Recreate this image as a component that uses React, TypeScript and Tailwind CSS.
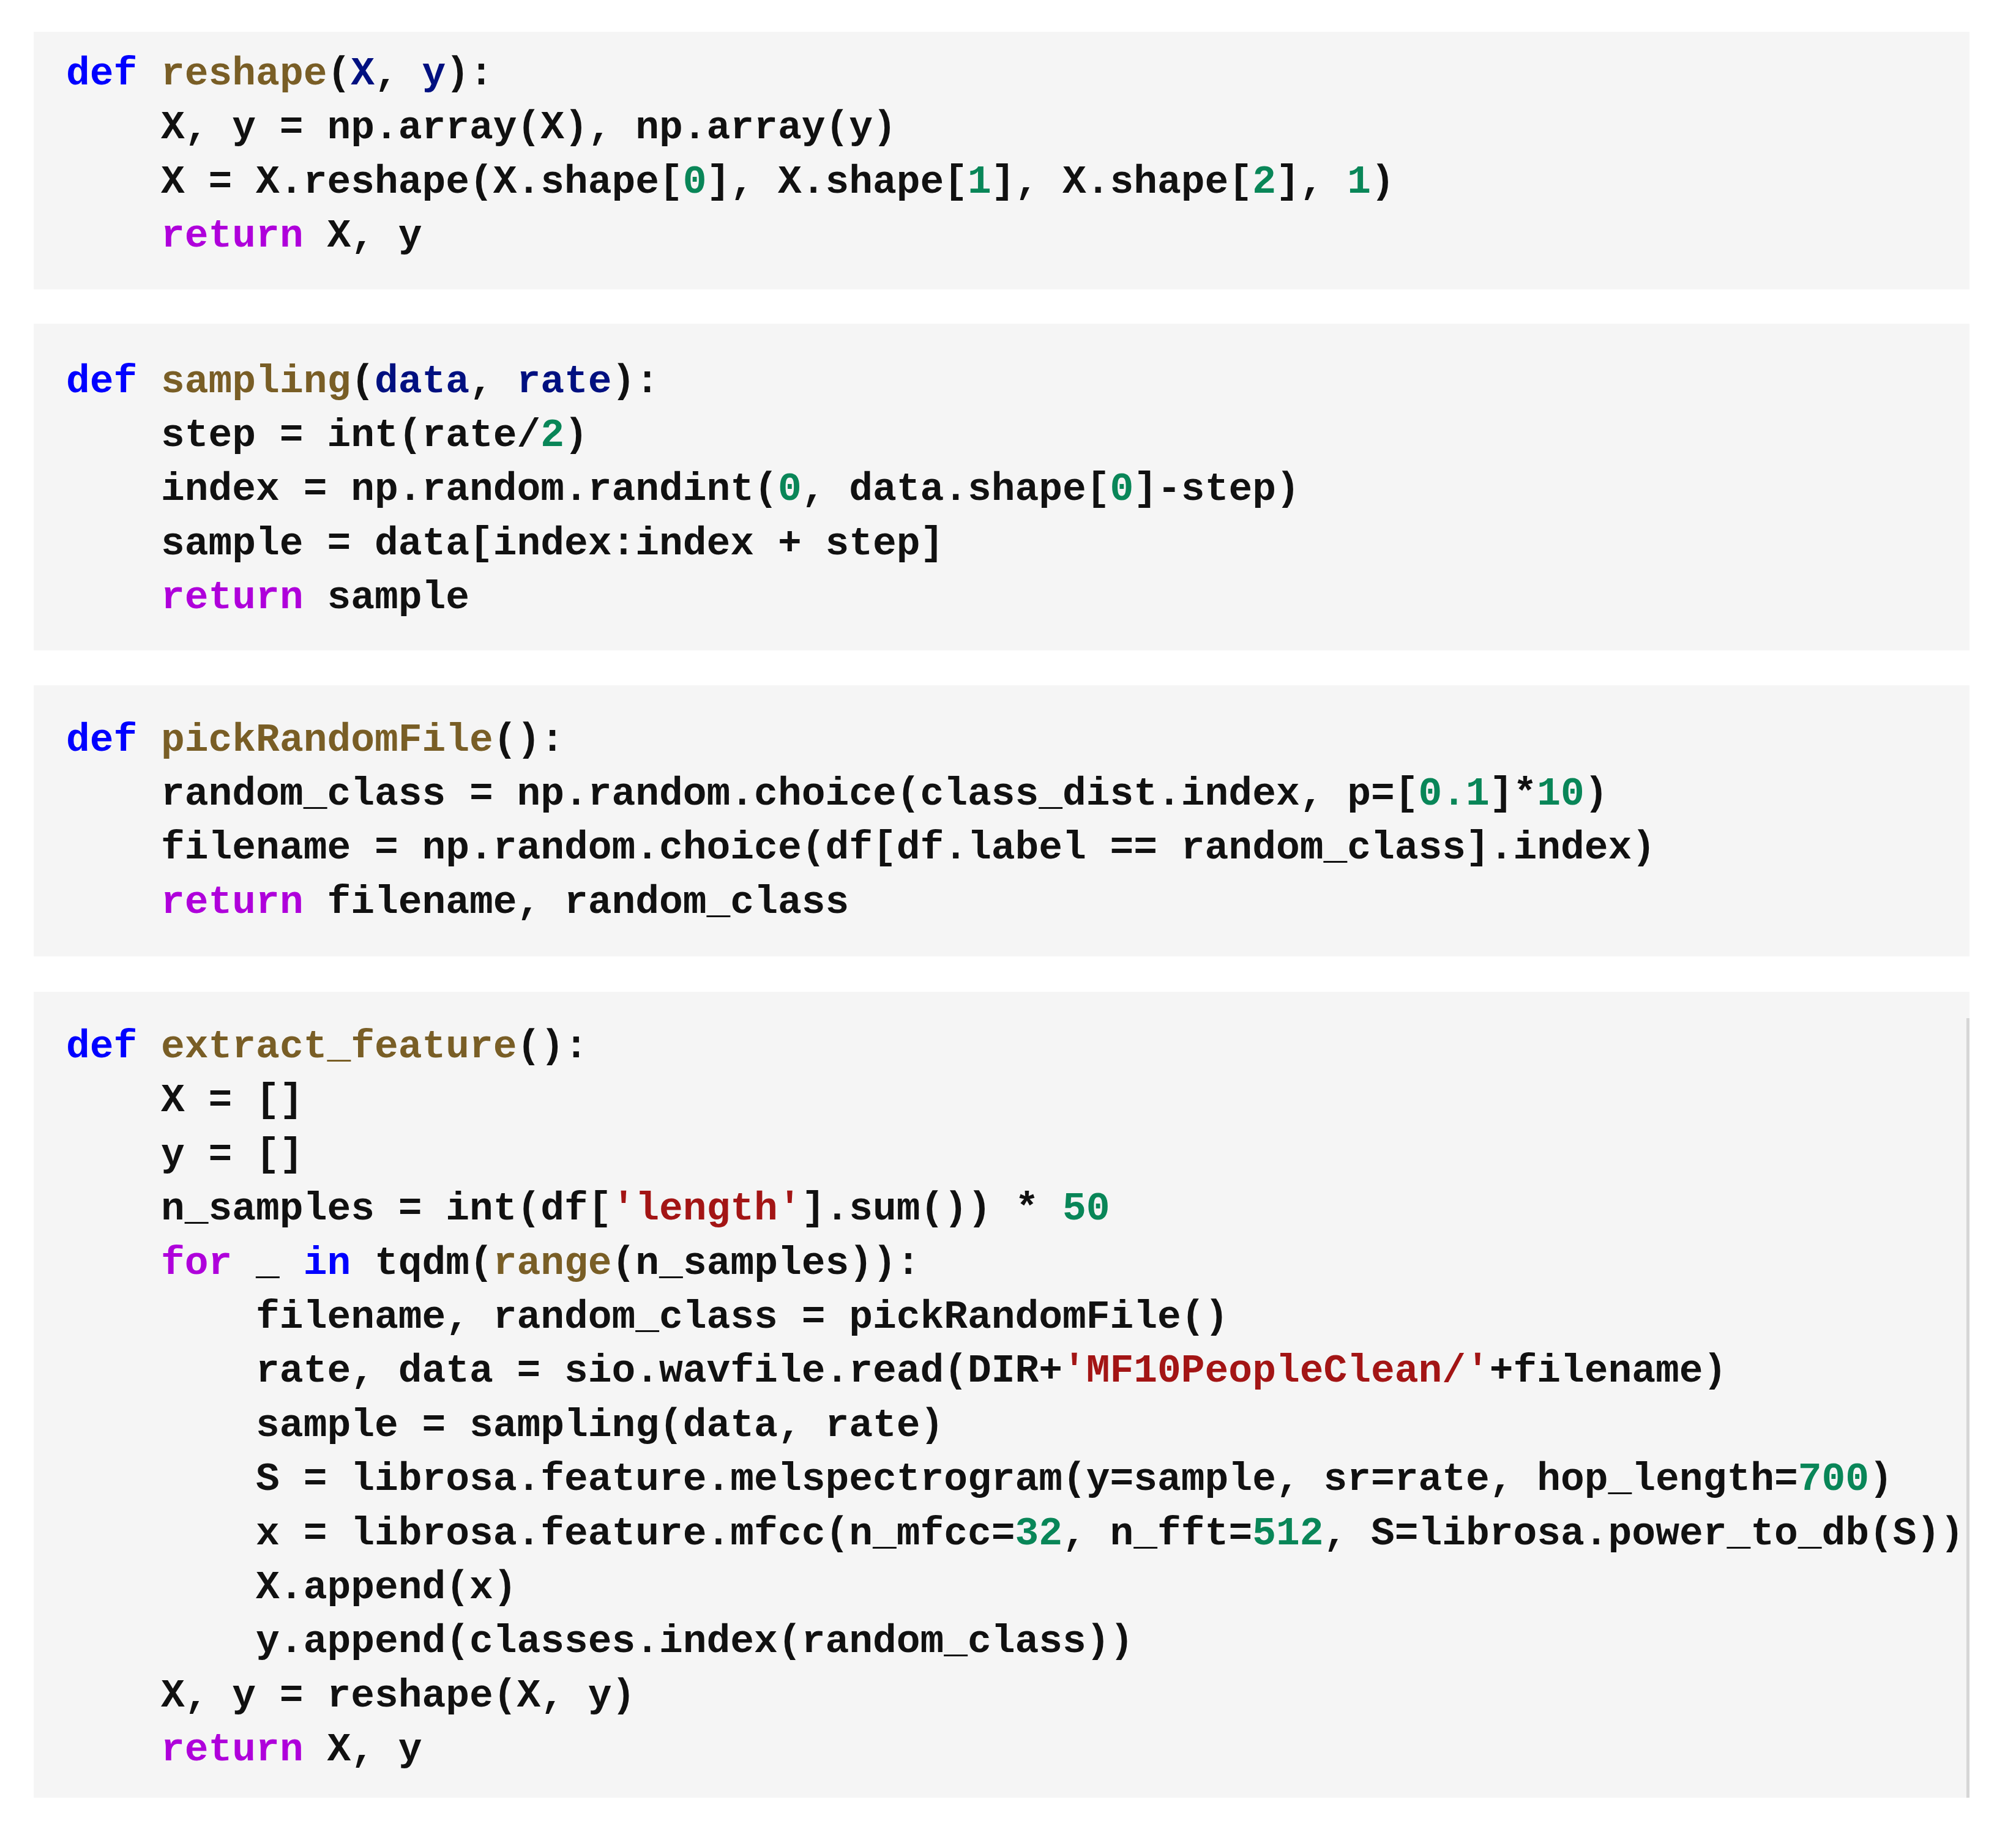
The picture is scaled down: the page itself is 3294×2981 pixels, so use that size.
type Tok = [string, string?];

const KW = "text-[#0000ff]";
const FN = "text-[#795e26]";
const PR = "text-[#001080]";
const RT = "text-[#af00db]";
const NUM = "text-[#098658]";
const STR = "text-[#a31515]";

type Block = {
  box: string;
  border?: boolean;
  lines: Tok[][];
};

const blocks: Block[] = [
  {
    box: "pt-[25px] pb-[42px]",
    lines: [
      [["def", KW], [" "], ["reshape", FN], ["("], ["X", PR], [", "], ["y", PR], ["):"]],
      [["    X, y = np.array(X), np.array(y)"]],
      [
        ["    X = X.reshape(X.shape["],
        ["0", NUM],
        ["], X.shape["],
        ["1", NUM],
        ["], X.shape["],
        ["2", NUM],
        ["], "],
        ["1", NUM],
        [")"],
      ],
      [["    "], ["return", RT], [" X, y"]],
    ],
  },
  {
    box: "mt-[56px] pt-[51px] pb-[41px]",
    lines: [
      [["def", KW], [" "], ["sampling", FN], ["("], ["data", PR], [", "], ["rate", PR], ["):"]],
      [["    step = int(rate/"], ["2", NUM], [")"]],
      [["    index = np.random.randint("], ["0", NUM], [", data.shape["], ["0", NUM], ["]-step)"]],
      [["    sample = data[index:index + step]"]],
      [["    "], ["return", RT], [" sample"]],
    ],
  },
  {
    box: "mt-[57px] pt-[46px] pb-[44px]",
    lines: [
      [["def", KW], [" "], ["pickRandomFile", FN], ["():"]],
      [["    random_class = np.random.choice(class_dist.index, p=["], ["0.1", NUM], ["]*"], ["10", NUM], [")"]],
      [["    filename = np.random.choice(df[df.label == random_class].index)"]],
      [["    "], ["return", RT], [" filename, random_class"]],
    ],
  },
  {
    box: "mt-[58px] pt-[46px] pb-[33px]",
    border: true,
    lines: [
      [["def", KW], [" "], ["extract_feature", FN], ["():"]],
      [["    X = []"]],
      [["    y = []"]],
      [["    n_samples = int(df["], ["'length'", STR], ["].sum()) * "], ["50", NUM]],
      [["    "], ["for", RT], [" _ "], ["in", KW], [" tqdm("], ["range", FN], ["(n_samples)):"]],
      [["        filename, random_class = pickRandomFile()"]],
      [["        rate, data = sio.wavfile.read(DIR+"], ["'MF10PeopleClean/'", STR], ["+filename)"]],
      [["        sample = sampling(data, rate)"]],
      [["        S = librosa.feature.melspectrogram(y=sample, sr=rate, hop_length="], ["700", NUM], [")"]],
      [
        ["        x = librosa.feature.mfcc(n_mfcc="],
        ["32", NUM],
        [", n_fft="],
        ["512", NUM],
        [", S=librosa.power_to_db(S))"],
      ],
      [["        X.append(x)"]],
      [["        y.append(classes.index(random_class))"]],
      [["    X, y = reshape(X, y)"]],
      [["    "], ["return", RT], [" X, y"]],
    ],
  },
];

const CodeBlock = ({ block }: { block: Block }) => {
  return (
    <div className={`relative bg-[#f5f5f5] pl-[53px] ${block.box}`}>
      {block.lines.map((line, i) => (
        <div key={i} className="whitespace-pre h-[88.4px]">
          {line.map(([text, color], j) => (
            <span key={j} className={color}>
              {text}
            </span>
          ))}
        </div>
      ))}
      {/* scrollbar edge on the last cell */}
      {block.border && (
        <div className="absolute right-0 top-[43px] bottom-0 w-[5px] bg-[#d6d6d6]" />
      )}
    </div>
  );
};

const App = () => {
  return (
    <div className="min-h-screen bg-white pt-[52px] pl-[55px]">
      <div className="w-[3163px] flex flex-col font-['Liberation_Mono','Courier_New',monospace] font-bold text-[64.6px] leading-[88.4px] text-[#111111]">
        {blocks.map((b, i) => (
          <CodeBlock key={i} block={b} />
        ))}
      </div>
    </div>
  );
};

export default App;
